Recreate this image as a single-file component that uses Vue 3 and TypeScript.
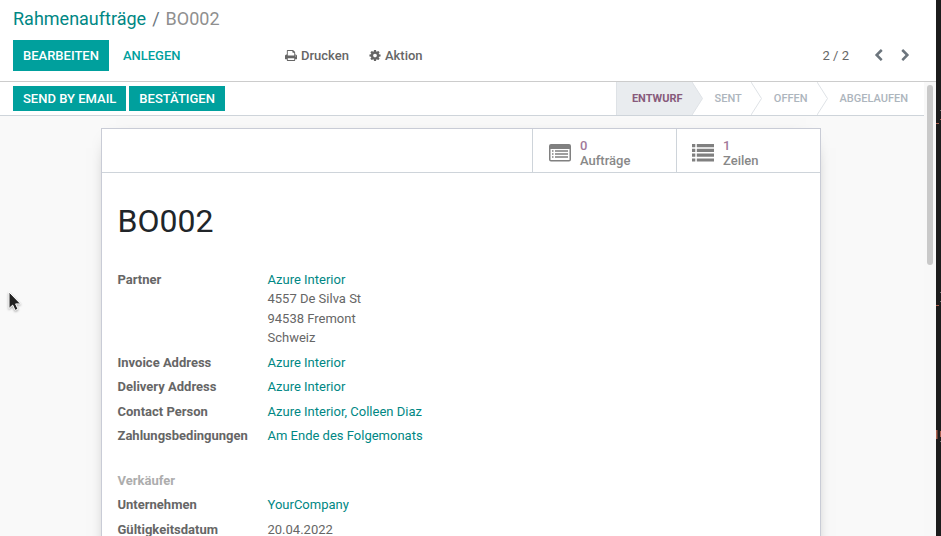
<script setup lang="ts">
interface Field {
  label: string
  value: string
  link?: boolean
  lines?: string[]
}

const steps: string[] = ['Entwurf', 'Sent', 'Offen', 'Abgelaufen']

const partnerFields: Field[] = [
  { label: 'Partner', value: 'Azure Interior', link: true, lines: ['4557 De Silva St', '94538 Fremont', 'Schweiz'] },
  { label: 'Invoice Address', value: 'Azure Interior', link: true },
  { label: 'Delivery Address', value: 'Azure Interior', link: true },
  { label: 'Contact Person', value: 'Azure Interior, Colleen Diaz', link: true },
  { label: 'Zahlungsbedingungen', value: 'Am Ende des Folgemonats', link: true },
]

const sellerFields: Field[] = [
  { label: 'Unternehmen', value: 'YourCompany', link: true },
  { label: 'Gültigkeitsdatum', value: '20.04.2022' },
]
</script>

<template>
  <div class="screen">
    <div class="window">
      <header class="control-panel">
        <div class="breadcrumb">
          <a>Rahmenaufträge</a><span class="sep">/</span><span class="current">BO002</span>
        </div>
        <div class="toolbar">
          <div class="main-actions">
            <button class="btn primary">Bearbeiten</button>
            <button class="btn flat">Anlegen</button>
          </div>
          <div class="menus">
            <span class="menu">
              <svg class="fa" viewBox="64 0 1664 1792"><path d="M448 1536h896v-256h-896v256zm0-640h896v-384h-160q-40 0-68-28t-28-68v-160h-640v640zm1152 64q0-26-19-45t-45-19-45 19-19 45 19 45 45 19 45-19 19-45zm128 0v416q0 13-9.500 22.500t-22.500 9.500h-224v160q0 40-28 68t-68 28h-960q-40 0-68-28t-28-68v-160h-224q-13 0-22.500-9.500t-9.500-22.500v-416q0-79 56.500-135.500t135.500-56.500h64v-544q0-40 28-68t68-28h672q40 0 88 20t76 48l152 152q28 28 48 76t20 88v256h64q79 0 135.500 56.500t56.500 135.500z" /></svg>
              Drucken
            </span>
            <span class="menu">
              <svg class="fa cog" viewBox="128 0 1536 1792"><path d="M1152 896q0-106-75-181t-181-75-181 75-75 181 75 181 181 75 181-75 75-181zm512-109v222q0 12-8 23t-20 13l-185 28q-19 54-39 91 35 50 107 138 10 12 10 25t-9 23q-27 37-99 108t-94 71q-12 0-26-9l-138-108q-44 23-91 38-16 136-29 186-7 28-36 28h-222q-14 0-24.500-8.500t-11.500-21.500l-28-184q-49-16-90-37l-141 107q-10 9-25 9-14 0-25-11-126-114-165-168-7-10-7-23 0-12 8-23 15-21 51-66.500t54-70.500q-27-50-41-99l-183-27q-13-2-21-12.500t-8-23.500v-222q0-12 8-23t19-13l186-28q14-46 39-92-40-57-107-138-10-12-10-24 0-10 9-23 26-36 98.500-107.500t94.500-71.500q13 0 26 10l138 107q44-23 91-38 16-136 29-186 7-28 36-28h222q14 0 24.500 8.500t11.500 21.500l28 184q49 16 90 37l142-107q9-9 24-9 13 0 25 10 129 119 165 170 7 8 7 22 0 12-8 23-15 21-51 66.500t-54 70.500q26 50 41 98l183 28q13 2 21 12.500t8 23.500z" /></svg>
              Aktion
            </span>
          </div>
          <div class="pager">
            <span class="count">2 / 2</span>
            <svg class="chev" viewBox="0 0 1792 1792"><path d="M1427 301l-531 531 531 531q19 19 19 45t-19 45l-166 166q-19 19-45 19t-45-19l-742-742q-19-19-19-45t19-45l742-742q19-19 45-19t45 19l166 166q19 19 19 45t-19 45z" /></svg>
            <svg class="chev" viewBox="0 0 1792 1792"><path d="M1363 877l-742 742q-19 19-45 19t-45-19l-166-166q-19-19-19-45t19-45l531-531-531-531q-19-19-19-45t19-45l166-166q19-19 45-19t45 19l742 742q19 19 19 45t-19 45z" /></svg>
          </div>
        </div>
      </header>

      <div class="content">
        <main class="form-view">
          <div class="statusbar">
            <div class="status-actions">
              <button class="btn primary small">Send by Email</button>
              <button class="btn primary small">Bestätigen</button>
            </div>
            <div class="steps">
              <div v-for="(step, i) in steps" :key="step" class="step" :class="{ active: i === 0 }">
                <span>{{ step }}</span>
                <svg v-if="i < steps.length - 1" class="arrow" viewBox="0 0 11 33">
                  <path d="M0 0L10.500 16.500L0 33" />
                </svg>
              </div>
            </div>
          </div>

          <section class="sheet">
            <div class="button-box">
              <div class="stat">
                <svg class="stat-icon" viewBox="0 0 22 18">
                  <path fill-rule="evenodd" d="M2 0h18q2 0 2 2v13.500q0 2-2 2h-18q-2 0-2-2v-13.500q0-2 2-2zM1.500 5v10.500q0 .6.6.6h17.800q.6 0 .6-.6v-10.500z" />
                  <path d="M3 6.300h1.500v1.400H3zM3 9.300h1.500v1.400H3zM3 12.300h1.500v1.400H3zM6 6.300h13v1.400H6zM6 9.300h13v1.400H6zM6 12.300h13v1.400H6z" />
                </svg>
                <div><b>0</b><span>Aufträge</span></div>
              </div>
              <div class="stat lines">
                <svg class="stat-icon" viewBox="0 0 22 18">
                  <path d="M0 0h3.300v3.200H0zM0 4.800h3.300v3.200H0zM0 9.600h3.300v3.200H0zM0 14.400h3.300v3.200H0zM4.800 0H22v3.200H4.800zM4.800 4.800H22v3.200H4.800zM4.800 9.600H22v3.200H4.800zM4.800 14.400H22v3.200H4.800z" />
                </svg>
                <div><b>1</b><span>Zeilen</span></div>
              </div>
            </div>

            <h1>BO002</h1>

            <dl class="group">
              <div v-for="f in partnerFields" :key="f.label" class="field">
                <dt>{{ f.label }}</dt>
                <dd>
                  <a v-if="f.link">{{ f.value }}</a>
                  <div v-for="line in f.lines" :key="line">{{ line }}</div>
                </dd>
              </div>
            </dl>

            <h2>Verkäufer</h2>
            <dl class="group">
              <div v-for="f in sellerFields" :key="f.label" class="field">
                <dt>{{ f.label }}</dt>
                <dd><a v-if="f.link">{{ f.value }}</a><span v-else>{{ f.value }}</span></dd>
              </div>
            </dl>
          </section>
        </main>
        <div class="scrollbar"><div class="thumb"></div></div>
      </div>
    </div>

    <aside class="backdrop">
      <svg viewBox="0 0 5 536">
        <path class="rust" d="M0 123h3v1H0zM4 119h1v1H4zM0 305h3v1H0z" />
        <path class="grey" d="M4 110h1v1H4zM4 292h1v1H4zM4 301h1v1H4zM4 441h1v1H4z" />
        <path class="rust" d="M0 430h1.500v9H0zM4 431h1v6H4z" />
      </svg>
    </aside>

    <svg class="pointer" viewBox="0 0 14 21">
      <path d="M1 1v16.500l3.700-3.400 2.400 5.300 2.900-1.300-2.400-5.200h5z" />
    </svg>
  </div>
</template>

<style>
body {
  margin: 0;
  overflow: hidden;
}
</style>

<style scoped>
* {
  box-sizing: border-box;
}
.screen {
  position: relative;
  display: flex;
  width: 941px;
  height: 536px;
  overflow: hidden;
  font-family: Roboto, "Liberation Sans", sans-serif;
  font-size: 13px;
  line-height: 19.5px;
  color: #666;
}
.window {
  width: 936px;
  display: flex;
  flex-direction: column;
  background: #fff;
}
a {
  color: #008784;
}
.control-panel {
  flex: none;
  height: 82px;
  border-bottom: 1px solid #ccc;
  padding: 5px 16px 0 13px;
}
.breadcrumb {
  height: 27px;
  font-size: 18px;
  line-height: 27px;
}
.sep {
  padding: 0 6px;
  color: #6c757d;
}
.current {
  color: #8f8f8f;
}
.toolbar {
  display: flex;
  height: 31px;
  margin-top: 8px;
}
.main-actions {
  width: 262px;
  display: flex;
  gap: 4px;
}
.btn {
  border: 0;
  padding: 0 10px;
  font: 500 13px/19.5px Roboto, sans-serif;
  text-transform: uppercase;
  white-space: nowrap;
  background: none;
}
.primary {
  background: #00a09d;
  color: #fff;
}
.flat {
  color: #00a09d;
}
.small {
  height: 25px;
}
.menus {
  display: flex;
  align-items: center;
  gap: 20px;
  padding-left: 10px;
  font-weight: 500;
}
.menu {
  display: flex;
  align-items: center;
  gap: 4px;
}
.fa {
  width: 12px;
  height: 13px;
  fill: currentColor;
}
.pager {
  display: flex;
  align-items: center;
  margin-left: auto;
  padding-right: 8px;
}
.count {
  margin-right: 23px;
}
.chev {
  width: 13px;
  height: 13px;
  fill: #6c757d;
}
.chev + .chev {
  margin-left: 14px;
}
.content {
  flex: 1;
  min-height: 0;
  display: flex;
}
.form-view {
  width: 924px;
  overflow: hidden;
  background: #f9f9f9;
}
.statusbar {
  display: flex;
  justify-content: space-between;
  height: 34px;
  padding-left: 13px;
  background: #fff;
  border-bottom: 1px solid #ced4da;
}
.status-actions {
  display: flex;
  align-items: center;
  gap: 3px;
}
.steps {
  display: flex;
  border-left: 1px solid #dee2e6;
  font-size: 11px;
  font-weight: 500;
  text-transform: uppercase;
  color: #adb5bd;
}
.step {
  position: relative;
  display: flex;
  align-items: center;
  padding: 0 9px 0 23px;
}
.step:last-child {
  padding-right: 16px;
}
.step.active {
  padding-left: 15px;
  background: #e9ecef;
  color: #875a7b;
  font-weight: 700;
}
.arrow {
  position: absolute;
  left: 100%;
  top: 0;
  width: 11px;
  height: 33px;
  fill: #fff;
  stroke: #dee2e6;
}
.active .arrow {
  fill: #e9ecef;
}
.sheet {
  width: 720px;
  height: 600px;
  margin: 12px 0 0 101px;
  border: 1px solid #c9ccd6;
  background: #fff;
  box-shadow: 0 5px 20px -15px #000;
}
.button-box {
  display: flex;
  justify-content: flex-end;
  height: 44px;
  border-bottom: 1px solid #ced4da;
}
.stat {
  display: flex;
  align-items: center;
  width: 144px;
  border-left: 1px solid #ced4da;
  padding: 5px 0 0 16px;
  font-weight: 500;
  line-height: 15px;
  color: #888;
}
.stat.lines {
  padding-left: 15px;
}
.stat b,
.stat span {
  display: block;
  font-weight: 500;
}
.stat b {
  color: #a2799a;
}
.stat-icon {
  width: 22px;
  height: 18px;
  margin-right: 9px;
  fill: #808080;
}
h1 {
  margin: 29px 0 0 15.5px;
  font-size: 32px;
  font-weight: 400;
  line-height: 38px;
  color: #212529;
}
.group {
  margin: 29.5px 0 0 15.5px;
}
.field {
  display: grid;
  grid-template-columns: 150px 1fr;
  padding-bottom: 5px;
}
dt {
  font-weight: 700;
}
dd {
  margin: 0;
}
h2 {
  margin: 20.5px 0 0 15.5px;
  font-size: 13px;
  line-height: 19.5px;
  font-weight: 700;
  color: #adadad;
}
h2 + .group {
  margin-top: 4.5px;
}
.scrollbar {
  width: 12px;
  padding: 3px 3px 0;
  background: #f8f8f8;
}
.thumb {
  width: 6px;
  height: 180px;
  border-radius: 3px;
  background: #c9c9c9;
}
.backdrop {
  width: 5px;
  height: 536px;
  background: #1c1c1c;
}
.backdrop svg {
  display: block;
  width: 5px;
  height: 536px;
}
.rust {
  fill: #a9604e;
}
.grey {
  fill: #777;
}
.pointer {
  position: absolute;
  left: 8px;
  top: 291px;
  width: 14px;
  height: 21px;
  fill: #222;
  stroke: #fff;
  stroke-width: 1;
  filter: drop-shadow(0 1px 1px rgba(0, 0, 0, 0.35));
}
</style>
